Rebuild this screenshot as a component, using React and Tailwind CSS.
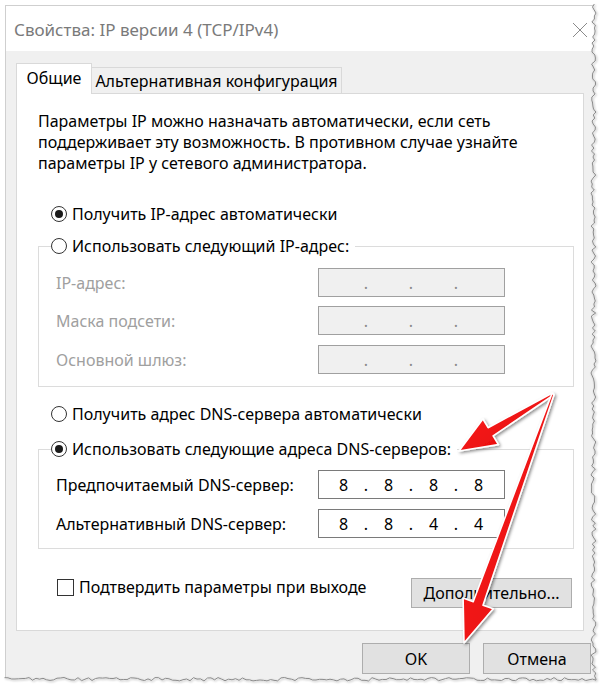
import React from 'react';

function rng(seed) {
  let s = seed;
  return () => {
    s = (s * 1103515245 + 12345) % 2147483648;
    return s / 2147483648;
  };
}

function arrowPoly(S, T, L, W, w0, w1) {
  const dx = T[0] - S[0];
  const dy = T[1] - S[1];
  const len = Math.hypot(dx, dy);
  const u = [dx / len, dy / len];
  const p = [u[1], -u[0]];
  const B = [T[0] - L * u[0], T[1] - L * u[1]];
  const pt = (b, k) => [b[0] + p[0] * k, b[1] + p[1] * k];
  const pts = [pt(S, w0), pt(B, w1), pt(B, W), T, pt(B, -W), pt(B, -w1), pt(S, -w0)];
  return pts.map((q) => q[0].toFixed(1) + ',' + q[1].toFixed(1)).join(' ');
}

function Overlay() {
  const r = rng(12345);
  const right = [];
  for (let y = 4; y <= 680; y += 3) right.push([591 + r() * 5, y]);
  const bottom = [];
  for (let x = 596; x >= 4; x -= 3.5) bottom.push([x, 677.5 + r() * 3.5]);
  const edge = [...right, ...bottom];
  const edgeStr = edge.map((q) => q[0].toFixed(1) + ',' + q[1].toFixed(1)).join(' ');
  const poly = '610,0 592,0 ' + edgeStr + ' 0,680 0,694 610,694';
  const S = [553, 394];
  return (
    <svg className="absolute left-0 top-0 pointer-events-none" width="610" height="694" viewBox="0 0 610 694">
      <defs>
        <filter id="sh" x="-20%" y="-20%" width="140%" height="140%">
          <feDropShadow dx="1.5" dy="1.5" stdDeviation="1.6" floodColor="#000" floodOpacity="0.45" />
        </filter>
        <filter id="tsh" x="-5%" y="-5%" width="110%" height="110%">
          <feDropShadow dx="1" dy="1" stdDeviation="1" floodColor="#000" floodOpacity="0.35" />
        </filter>
        <linearGradient id="rg" x1="0" y1="0" x2="1" y2="1">
          <stop offset="0" stopColor="#ff2a2a" />
          <stop offset="1" stopColor="#e00000" />
        </linearGradient>
      </defs>
      <polygon points={poly} fill="#ffffff" />
      <polyline points={edgeStr} fill="none" stroke="#8a8a8a" strokeWidth="1" filter="url(#tsh)" />
      <g filter="url(#sh)">
        <polygon points={arrowPoly(S, [459, 451], 37, 15, 1.2, 4.8)} fill="url(#rg)" stroke="#ffffff" strokeWidth="1.6" strokeLinejoin="round" />
        <polygon points={arrowPoly(S, [464, 643], 42, 16, 1.2, 5.2)} fill="url(#rg)" stroke="#ffffff" strokeWidth="1.6" strokeLinejoin="round" />
      </g>
    </svg>
  );
}

function Radio({ checked }) {
  return (
    <span className="w-[16px] h-[16px] rounded-full border border-[#333333] bg-white flex items-center justify-center shrink-0">
      {checked && <span className="w-[8px] h-[8px] rounded-full bg-[#1a1a1a]" />}
    </span>
  );
}

function RadioRow({ checked, children }) {
  return (
    <span className="flex items-center gap-[5px] h-[20px] bg-white pr-[6px]">
      <Radio checked={checked} />
      <span className="text-black whitespace-nowrap">{children}</span>
    </span>
  );
}

function IpField({ values, disabled }) {
  const segs = values || ['', '', '', ''];
  const out = [];
  segs.forEach((v, i) => {
    out.push(
      <span key={'s' + i} className="w-[41px] flex justify-center">
        {v}
      </span>
    );
    if (i < 3)
      out.push(
        <span key={'d' + i} className={'w-[4px] flex justify-center ' + (disabled ? 'text-[#8a8a8a]' : '')}>
          .
        </span>
      );
  });
  return (
    <div
      className={
        'w-[187px] h-[29px] flex items-center pl-[4px] ' +
        (disabled ? 'bg-[#f0f0f0] border border-[#a0a0a0]' : 'bg-white border border-[#7a7a7a] text-black')
      }
    >
      {out}
    </div>
  );
}

function FieldRow({ label, disabled, values, className }) {
  return (
    <div className={'flex items-center ' + className}>
      <span className={'w-[262px] whitespace-nowrap ' + (disabled ? 'text-[#a0a0a0]' : 'text-black')}>{label}</span>
      <IpField disabled={disabled} values={values} />
    </div>
  );
}

export default function App() {
  return (
    <div className="relative w-[610px] h-[694px] bg-white overflow-hidden font-['Noto_Sans',sans-serif] text-[16px] leading-[20px] text-black">
      <div className="ml-[5px] mt-[5px] w-[600px] h-[682px] border border-[#cfcfcf] bg-[#f0f0f0] flex flex-col">
        <div className="h-[45px] bg-white flex items-start justify-between pt-[14px] pl-[8px] pr-[16px]">
          <span className="text-[#7a7a7a] text-[17px] whitespace-nowrap">Свойства: IP версии 4 (TCP/IPv4)</span>
          <svg width="16" height="16" viewBox="0 0 16 16" className="mt-[2px]">
            <path d="M1 1 L15 15 M15 1 L1 15" stroke="#8a8a8a" strokeWidth="1" fill="none" />
          </svg>
        </div>
        <div className="pl-[10px] pt-[12px]">
          <div className="flex items-end h-[30px]">
            <div className="relative z-10 w-[76px] h-[31px] -mb-px bg-white border-x border-t border-[#d9d9d9] flex items-center justify-center pb-[2px]">
              Общие
            </div>
            <div className="w-[250px] h-[26px] bg-[#f0f0f0] border-r border-t border-[#d9d9d9] flex items-center justify-center">
              <span className="whitespace-nowrap">Альтернативная конфигурация</span>
            </div>
          </div>
          <div className="w-[568px] h-[538px] bg-white border border-[#d9d9d9] pl-[21px] pt-[17px] flex flex-col">
            <p className="leading-[21px] whitespace-nowrap">
              Параметры IP можно назначать автоматически, если сеть
              <br />
              поддерживает эту возможность. В противном случае узнайте
              <br />
              параметры IP у сетевого администратора.
            </p>
            <div className="mt-[30px] ml-[13px] flex">
              <RadioRow checked>Получить IP-адрес автоматически</RadioRow>
            </div>
            <fieldset className="mt-[12px] w-[536px] border border-[#dcdcdc] pb-[12px] pl-[17px]">
              <legend className="ml-[-5px]">
                <RadioRow>Использовать следующий IP-адрес:</RadioRow>
              </legend>
              <FieldRow className="mt-[12px]" disabled label="IP-адрес:" />
              <FieldRow className="mt-[9px]" disabled label="Маска подсети:" />
              <FieldRow className="mt-[10px]" disabled label="Основной шлюз:" />
            </fieldset>
            <div className="mt-[17px] ml-[13px] flex">
              <RadioRow>Получить адрес DNS-сервера автоматически</RadioRow>
            </div>
            <fieldset className="mt-[15px] w-[536px] border border-[#dcdcdc] pb-[10px] pl-[17px]">
              <legend className="ml-[-5px]">
                <RadioRow checked>Использовать следующие адреса DNS-серверов:</RadioRow>
              </legend>
              <FieldRow className="mt-[11px]" label="Предпочитаемый DNS-сервер:" values={['8', '8', '8', '8']} />
              <FieldRow className="mt-[10px]" label="Альтернативный DNS-сервер:" values={['8', '8', '4', '4']} />
            </fieldset>
            <div className="mt-[28px] w-[536px] flex items-start justify-between">
              <div className="ml-[19px] flex items-center gap-[5px] h-[20px]">
                <span className="w-[17px] h-[17px] border border-[#333333] bg-white shrink-0" />
                <span className="whitespace-nowrap">Подтвердить параметры при выходе</span>
              </div>
              <button className="mt-[1px] mr-[2px] w-[161px] h-[30px] bg-[#e1e1e1] border border-[#adadad] flex items-center justify-center whitespace-nowrap">
                Дополнительно...
              </button>
            </div>
          </div>
        </div>
        <div className="mt-[12px] flex justify-end gap-[13px] pr-[13px]">
          <button className="w-[108px] h-[31px] bg-[#e1e1e1] border border-[#adadad] flex items-center justify-center">OK</button>
          <button className="w-[108px] h-[31px] bg-[#e1e1e1] border border-[#adadad] flex items-center justify-center">Отмена</button>
        </div>
      </div>
      <Overlay />
    </div>
  );
}
